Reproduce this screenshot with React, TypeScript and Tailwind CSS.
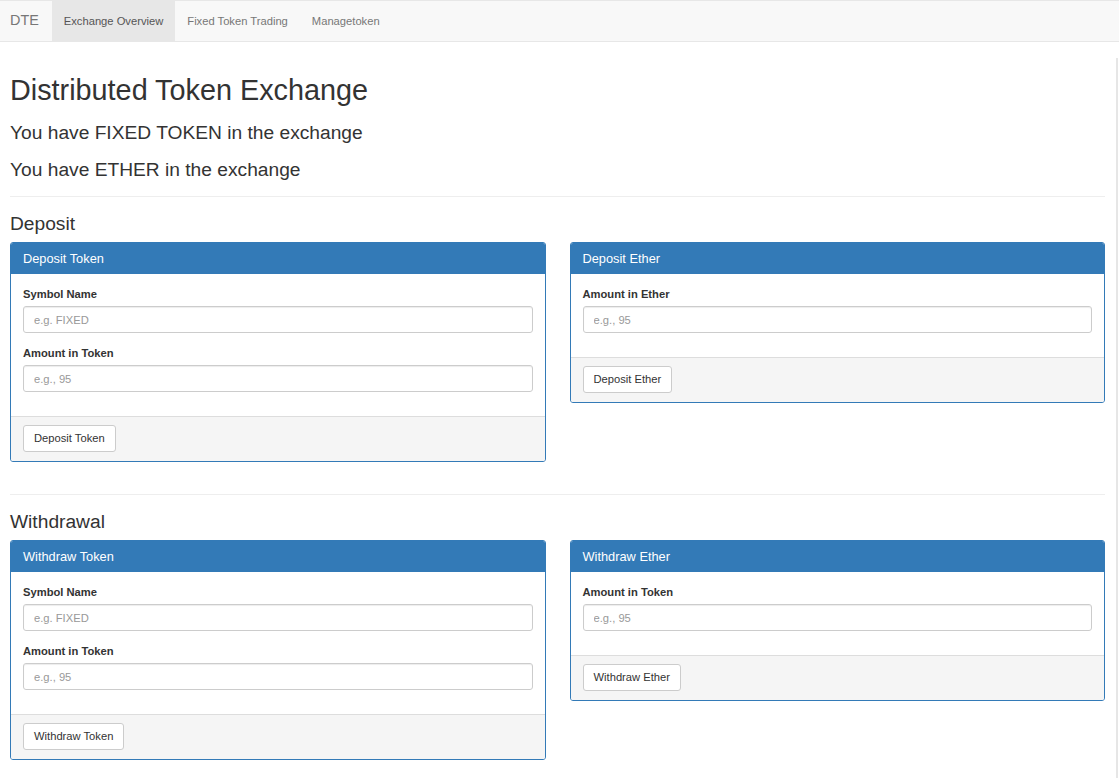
import React from "react";

const font = { fontFamily: '"Liberation Sans", Arial, Helvetica, sans-serif' };

function Field({ label, placeholder }: { label: string; placeholder: string }) {
  return (
    <div className="mb-[12px]">
      <label className="block mb-[4px] text-[11.2px] leading-[16px] font-bold text-[#333]">{label}</label>
      <input
        placeholder={placeholder}
        className="block w-full h-[27px] px-[10px] text-[11.2px] text-[#555] bg-white border border-[#ccc] rounded-[3px] shadow-[inset_0_1px_1px_rgba(0,0,0,0.075)] placeholder:text-[#999] outline-none"
      />
    </div>
  );
}

function Panel({
  title,
  fields,
  button,
}: {
  title: string;
  fields: { label: string; placeholder: string }[];
  button: string;
}) {
  return (
    <div className="border border-[#337ab7] rounded-[3px] bg-white self-start overflow-hidden">
      <div className="bg-[#337ab7] text-white text-[12.8px] leading-[15px] px-[12px] py-[8px]">{title}</div>
      <div className="px-[12px] pt-[12px] pb-[0px]">
        {fields.map((f) => (
          <Field key={f.label} label={f.label} placeholder={f.placeholder} />
        ))}
        <div className="h-[12px]" />
      </div>
      <div className="bg-[#f5f5f5] border-t border-[#ddd] px-[12px] pt-[8px] pb-[9px]">
        <button className="block h-[27px] px-[10px] bg-white border border-[#ccc] rounded-[3px] text-[11.2px] text-[#333]">
          {button}
        </button>
      </div>
    </div>
  );
}

export default function App() {
  return (
    <div className="relative min-h-[778px] bg-white text-[#333]" style={font}>
      <nav className="flex h-[42px] bg-[#f8f8f8] border-t border-b border-[#e7e7e7] pl-[10px]">
        <div className="flex items-center pr-[13px] text-[14.4px] text-[#777]">DTE</div>
        <div className="flex items-center px-[12px] bg-[#e7e7e7] text-[11.2px] text-[#555]">Exchange Overview</div>
        <div className="flex items-center px-[12px] text-[11.2px] text-[#777]">Fixed Token Trading</div>
        <div className="flex items-center px-[12px] text-[11.2px] text-[#777]">Managetoken</div>
      </nav>

      <main className="pl-[10px] pr-[14px]">
        <h1 className="mt-[32px] text-[28.8px] leading-[32px] text-[#333]">Distributed Token Exchange</h1>
        <h3 className="mt-[16px] text-[19.2px] leading-[21px]">You have FIXED TOKEN in the exchange</h3>
        <h3 className="mt-[16px] text-[19.2px] leading-[21px]">You have ETHER in the exchange</h3>
        <hr className="mt-[16px] border-0 border-t border-[#eee]" />

        <h3 className="mt-[16px] text-[19.2px] leading-[21px]">Deposit</h3>
        <div className="mt-[8px] grid grid-cols-2 gap-[24px] items-start">
          <Panel
            title="Deposit Token"
            fields={[
              { label: "Symbol Name", placeholder: "e.g. FIXED" },
              { label: "Amount in Token", placeholder: "e.g., 95" },
            ]}
            button="Deposit Token"
          />
          <Panel
            title="Deposit Ether"
            fields={[{ label: "Amount in Ether", placeholder: "e.g., 95" }]}
            button="Deposit Ether"
          />
        </div>

        <hr className="mt-[32px] border-0 border-t border-[#eee]" />

        <h3 className="mt-[16px] text-[19.2px] leading-[21px]">Withdrawal</h3>
        <div className="mt-[8px] grid grid-cols-2 gap-[24px] items-start">
          <Panel
            title="Withdraw Token"
            fields={[
              { label: "Symbol Name", placeholder: "e.g. FIXED" },
              { label: "Amount in Token", placeholder: "e.g., 95" },
            ]}
            button="Withdraw Token"
          />
          <Panel
            title="Withdraw Ether"
            fields={[{ label: "Amount in Token", placeholder: "e.g., 95" }]}
            button="Withdraw Ether"
          />
        </div>
      </main>

      <div className="absolute right-[1px] top-[58px] bottom-0 w-[2px] bg-[#e6e6e6]" />
    </div>
  );
}
